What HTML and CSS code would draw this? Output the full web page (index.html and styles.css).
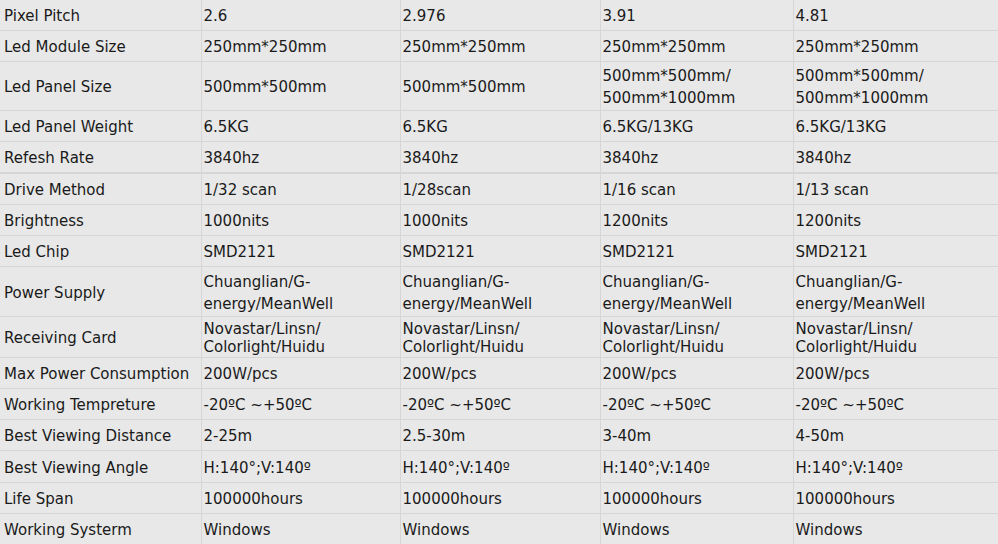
FILE: index.html
```html
<!DOCTYPE html>
<html>
<head>
<meta charset="utf-8">
<link rel="stylesheet" href="styles.css">
</head>
<body>
<table class="spec">
<colgroup>
<col class="c1"><col class="c2"><col class="c3"><col class="c4"><col class="c5">
</colgroup>
<tbody>
<tr><td>Pixel Pitch</td><td>2.6</td><td>2.976</td><td>3.91</td><td>4.81</td></tr>
<tr><td>Led Module Size</td><td>250mm*250mm</td><td>250mm*250mm</td><td>250mm*250mm</td><td>250mm*250mm</td></tr>
<tr class="tall"><td>Led Panel Size</td><td>500mm*500mm</td><td>500mm*500mm</td><td>500mm*500mm/<br>500mm*1000mm</td><td>500mm*500mm/<br>500mm*1000mm</td></tr>
<tr><td>Led Panel Weight</td><td>6.5KG</td><td>6.5KG</td><td>6.5KG/13KG</td><td>6.5KG/13KG</td></tr>
<tr class="thick"><td>Refesh Rate</td><td>3840hz</td><td>3840hz</td><td>3840hz</td><td>3840hz</td></tr>
<tr><td>Drive Method</td><td>1/32 scan</td><td>1/28scan</td><td>1/16 scan</td><td>1/13 scan</td></tr>
<tr><td>Brightness</td><td>1000nits</td><td>1000nits</td><td>1200nits</td><td>1200nits</td></tr>
<tr><td>Led Chip</td><td>SMD2121</td><td>SMD2121</td><td>SMD2121</td><td>SMD2121</td></tr>
<tr class="power"><td>Power Supply</td><td>Chuanglian/G-<br>energy/MeanWell</td><td>Chuanglian/G-<br>energy/MeanWell</td><td>Chuanglian/G-<br>energy/MeanWell</td><td>Chuanglian/G-<br>energy/MeanWell</td></tr>
<tr class="tight"><td>Receiving Card</td><td>Novastar/Linsn/<br>Colorlight/Huidu</td><td>Novastar/Linsn/<br>Colorlight/Huidu</td><td>Novastar/Linsn/<br>Colorlight/Huidu</td><td>Novastar/Linsn/<br>Colorlight/Huidu</td></tr>
<tr><td>Max Power Consumption</td><td>200W/pcs</td><td>200W/pcs</td><td>200W/pcs</td><td>200W/pcs</td></tr>
<tr><td>Working Tempreture</td><td>-20ºC ~+50ºC</td><td>-20ºC ~+50ºC</td><td>-20ºC ~+50ºC</td><td>-20ºC ~+50ºC</td></tr>
<tr><td>Best Viewing Distance</td><td>2-25m</td><td>2.5-30m</td><td>3-40m</td><td>4-50m</td></tr>
<tr class="plus"><td>Best Viewing Angle</td><td>H:140°;V:140º</td><td>H:140°;V:140º</td><td>H:140°;V:140º</td><td>H:140°;V:140º</td></tr>
<tr><td>Life Span</td><td>100000hours</td><td>100000hours</td><td>100000hours</td><td>100000hours</td></tr>
<tr><td>Working Systerm</td><td>Windows</td><td>Windows</td><td>Windows</td><td>Windows</td></tr>
</tbody>
</table>
</body>
</html>
```
FILE: styles.css
```css
html, body {
  margin: 0;
  padding: 0;
  background: #e8e8e8;
}
.spec {
  border-collapse: collapse;
  table-layout: fixed;
  width: 998px;
  font-family: "DejaVu Sans", Verdana, sans-serif;
  font-size: 15px;
  color: #1a1a1a;
  background: #e8e8e8;
}
.c1 { width: 201px; }
.c2 { width: 199px; }
.c3 { width: 200px; }
.c4 { width: 193px; }
.c5 { width: 205px; }
.spec td {
  border: 1px solid #d6d6d6;
  padding: 3px 2px 1px;
  height: 26px;
  line-height: 22px;
  vertical-align: middle;
  white-space: nowrap;
}
.spec tr:first-child td { border-top: none; }
.spec td:first-child { border-left: none; padding-left: 4px; }
.spec tr.tall td { height: 44px; }
.spec tr.power td { height: 45px; }
.spec tr.tight td { line-height: 18px; height: 36px; }
.spec tr.plus td { height: 27px; }
.spec tr.thick td { border-bottom: 2px solid #d6d6d6; }
```
